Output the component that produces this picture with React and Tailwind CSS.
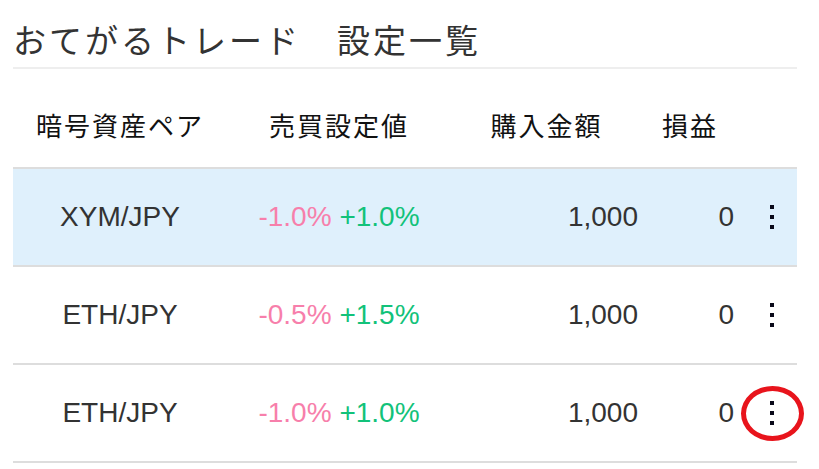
const rows = [
  { pair: "XYM/JPY", sell: "-1.0%", buy: "+1.0%", amount: "1,000", pnl: "0", active: true },
  { pair: "ETH/JPY", sell: "-0.5%", buy: "+1.5%", amount: "1,000", pnl: "0" },
  { pair: "ETH/JPY", sell: "-1.0%", buy: "+1.0%", amount: "1,000", pnl: "0", marked: true },
];

const cols = "grid grid-cols-[214px_224px_187px_96px_63px]";

function Dots() {
  return (
    <div className="flex flex-col gap-[6px]">
      <div className="w-[4px] h-[4px] bg-[#0a0a1a]" />
      <div className="w-[4px] h-[4px] bg-[#0a0a1a]" />
      <div className="w-[4px] h-[4px] bg-[#0a0a1a]" />
    </div>
  );
}

export default function App() {
  return (
    <div className="w-[819px] h-[469px] bg-white overflow-hidden font-['Liberation_Sans','Noto_Sans_CJK_JP',sans-serif]">
      <div className="mx-[13px] w-[784px]">
        {/* TITLE */}
        <div className="h-[67px] flex items-center pt-[13px] text-[33px] tracking-[3px] text-[#333] font-['Noto_Sans_CJK_JP',sans-serif]">
          おてがるトレード　設定一覧
        </div>
        <div className="h-[2px] bg-[#eeeeee]" />

        {/* HEADER */}
        <div className={`${cols} h-[100px] items-center pt-[12px] border-b-2 border-[#dddddd] text-[26px] tracking-[2px] text-[#111] font-['Noto_Sans_CJK_JP',sans-serif]`}>
          <div className="text-center">暗号資産ペア</div>
          <div className="text-center">売買設定値</div>
          <div className="text-center pl-[4px]">購入金額</div>
          <div className="text-center pl-[8px]">損益</div>
          <div />
        </div>

        {/* ROWS */}
        {rows.map((r, i) => (
          <div
            key={i}
            className={`${cols} h-[98px] items-center border-b-2 border-[#dddddd] text-[28px] text-[#333] ${r.active ? "bg-[#dff0fc]" : "bg-white"}`}
          >
            <div className="text-center">{r.pair}</div>
            <div className="text-center">
              <span className="text-[#f77fab]">{r.sell}</span>{" "}
              <span className="text-[#12c27a]">{r.buy}</span>
            </div>
            <div className="text-right">{r.amount}</div>
            <div className="text-right">{r.pnl}</div>
            <div className="relative flex items-center h-full pl-[36px]">
              <Dots />
              {r.marked && (
                <div className="absolute left-[7px] top-[21px] w-[63px] h-[55px] rounded-[50%] border-[5px] border-[#e8141c]" />
              )}
            </div>
          </div>
        ))}
      </div>
    </div>
  );
}
